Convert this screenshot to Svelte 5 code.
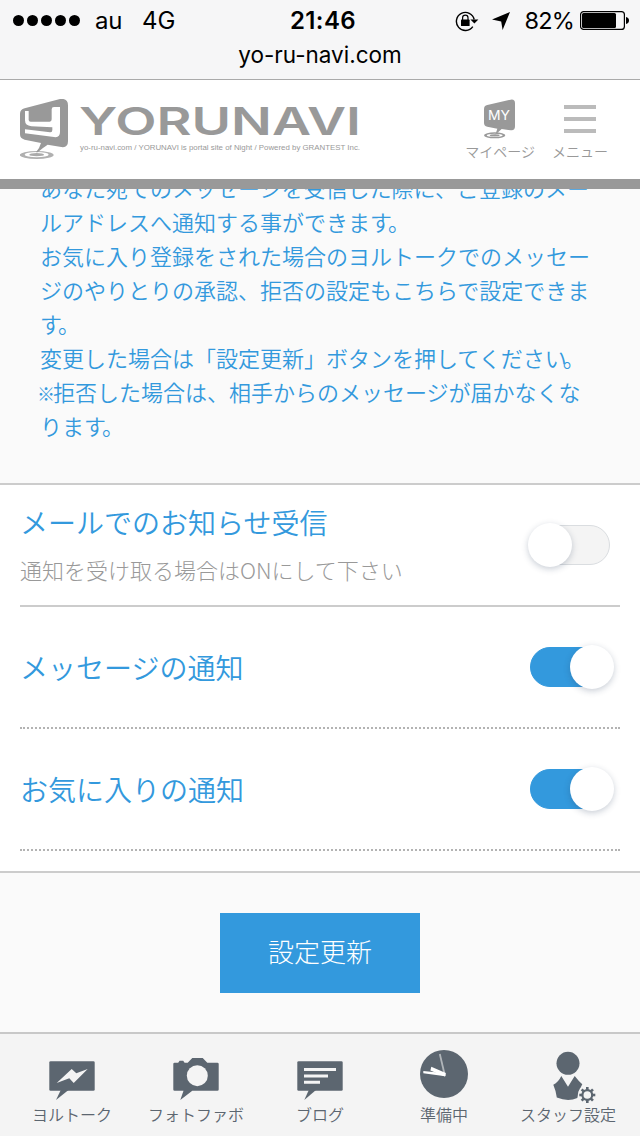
<script>
	let settings = $state([
		{ id: 'mail', title: 'メールでのお知らせ受信', note: '通知を受け取る場合はONにして下さい', on: false },
		{ id: 'message', title: 'メッセージの通知', note: '', on: true },
		{ id: 'favorite', title: 'お気に入りの通知', note: '', on: true }
	]);

	const tabs = [
		{ id: 'talk', label: 'ヨルトーク' },
		{ id: 'photo', label: 'フォトファボ' },
		{ id: 'blog', label: 'ブログ' },
		{ id: 'clock', label: '準備中' },
		{ id: 'staff', label: 'スタッフ設定' }
	];

	const teeth = [0, 45, 90, 135, 180, 225, 270, 315];
</script>

<div class="screen">
	<div class="status">
		<div class="status-row">
			<div class="carrier">
				<div class="signal"><i></i><i></i><i></i><i></i><i></i></div>
				<span class="au">au</span>
				<span>4G</span>
			</div>
			<b class="time">21:46</b>
			<div class="power">
				<svg class="lock" width="24" height="22" viewBox="0 0 24 22">
					<path d="M17.8 16.6A9 9 0 1 1 19.2 9.5" fill="none" stroke="#000" stroke-width="1.4" />
					<path d="M15.4 9.6h8l-4 4z" />
					<rect x="6" y="9.6" width="8.6" height="6.4" rx=".6" />
					<path d="M7.6 10V7.8a2.7 2.7 0 0 1 5.4 0V10" fill="none" stroke="#000" stroke-width="1.2" />
				</svg>
				<svg class="arrow" width="18" height="18" viewBox="0 0 18 18">
					<path d="M18 0L10.6 18L9.2 9.4L0 7.6z" />
				</svg>
				<span class="percent">82%</span>
				<svg width="49" height="19" viewBox="0 0 49 19">
					<rect x=".6" y=".6" width="43.8" height="17.8" rx="3" fill="none" stroke="#000" stroke-width="1.2" />
					<rect x="2" y="2" width="34" height="15" rx="1.5" />
					<path d="M46 6q3 .7 3 3.5T46 13z" />
				</svg>
			</div>
		</div>
		<div class="url">yo-ru-navi.com</div>
	</div>

	<header>
		<svg class="logo" width="342" height="70" viewBox="0 0 342 70">
			<g transform="scale(.33333) translate(-60 -57)">
				<ellipse cx="110" cy="225" rx="51" ry="12" fill="#b0b0b0" />
				<ellipse cx="110" cy="224" rx="36" ry="8" fill="#fff" />
				<ellipse cx="110" cy="224" rx="22" ry="5" fill="#aaa" />
				<path d="M74 85L180 57Q204 54 204 76V184Q204 204 184 201L143 194Q130 202 113 217H108Q119 204 123 189L74 179Q60 176 60 163V101Q60 89 74 85Z" fill="#999" />
				<path d="M75 93H86V120Q86 125 92 125H149Q155 125 155 118V88Q155 81 162 81H180V156Q180 174 162 171L75 160V148L150 157Q157 158 157 150V142L94 139Q75 137 75 121Z" fill="#fff" />
			</g>
			<text class="wordmark" x="59" y="36" textLength="282" lengthAdjust="spacingAndGlyphs">YORUNAVI</text>
			<text class="tagline" x="60" y="51" textLength="280" lengthAdjust="spacingAndGlyphs">yo-ru-navi.com / YORUNAVI is portal site of Night / Powered by GRANTEST Inc.</text>
		</svg>
		<nav>
			<div class="nav-item mypage">
				<svg width="32" height="40" viewBox="134 57 96 120">
					<ellipse cx="166" cy="166" rx="32" ry="9" fill="#999" />
					<ellipse cx="166" cy="166" rx="24" ry="5" fill="#fff" />
					<ellipse cx="166" cy="166" rx="15" ry="3.5" fill="#999" />
					<path d="M144 75L214 59Q227 57 227 70V139Q227 152 215 151L187 147L168 164L174 146L144 140Q134 138 134 129V87Q134 77 144 75Z" fill="#999" />
					<text class="my" x="179" y="120" textLength="66" lengthAdjust="spacingAndGlyphs" text-anchor="middle">MY</text>
				</svg>
				<span>マイページ</span>
			</div>
			<div class="nav-item menu">
				<div class="bars"><i></i><i></i><i></i></div>
				<span>メニュー</span>
			</div>
		</nav>
	</header>

	<section class="intro">
		<p>
			あなた宛てのメッセージを受信した際に、ご登録のメー<br />
			ルアドレスへ通知する事ができます<span class="maru">。</span><br />
			お気に入り登録をされた場合のヨルトークでのメッセー<br />
			ジのやりとりの承認、拒否の設定もこちらで設定できま<br />
			す<span class="maru">。</span><br />
			変更した場合は「設定更新」ボタンを押してください<span class="maru">。</span><br />
			<span class="kome">※</span>拒否した場合は、相手からのメッセージが届かなくな<br />
			ります<span class="maru">。</span>
		</p>
	</section>

	<section class="settings">
		{#each settings as s (s.id)}
			<div class="row" class:first={s.note}>
				<div>
					<h2>{s.title}</h2>
					{#if s.note}
						<p class="note">{s.note}</p>
					{/if}
				</div>
				<button class="toggle" class:on={s.on} aria-label={s.title} onclick={() => (s.on = !s.on)}>
					<span class="knob"></span>
				</button>
			</div>
		{/each}
	</section>

	<div class="actions">
		<button class="submit">設定更新</button>
	</div>

	<footer>
		{#each tabs as tab (tab.id)}
			<div class="tab">
				<svg width="60" height="60" viewBox="0 0 60 60" fill="#5c6670">
					{#if tab.id === 'talk'}
						<rect x="7.3" y="17.3" width="45.4" height="29.4" rx="1.3" />
						<path d="M18.8 46L14 56L26.5 46z" />
						<path d="M14.7 39L29.7 25L34.3 29.3L45.7 25L31.7 39L27.3 34.3z" fill="#f4f4f4" />
					{:else if tab.id === 'photo'}
						<path d="M8.6 18.8H12.2L13.6 16.7H17.2L18.6 18.8H21.7L26.3 14H36.7L41.3 18.8H51.4Q52.7 18.8 52.7 20V45.4Q52.7 46.7 51.4 46.7H26.3L14.3 56L17.5 46.7H8.6Q7.3 46.7 7.3 45.4V20Q7.3 18.8 8.6 18.8Z" />
						<circle cx="31.3" cy="31.7" r="10.5" fill="#f4f4f4" />
					{:else if tab.id === 'blog'}
						<rect x="7.3" y="17.3" width="45.4" height="29.4" rx="1.3" />
						<path d="M18.8 46L14.3 56L26 46z" />
						<path d="M14 24h32v3H14zM14 30.4h24v3H14zM14 36.8h16v3H14z" fill="#f4f4f4" />
					{:else if tab.id === 'clock'}
						<circle cx="30" cy="30" r="24" />
						<path d="M31 32L25.8 10" stroke="#b0b5b9" stroke-width="1.8" />
						<path d="M9.3 27L31.3 29.2V32.2L9.3 29.2z" fill="#fff" />
						<path d="M17.3 22.8L31.8 29L30.8 32.4L16.4 26.4z" fill="#fff" />
					{:else}
						<circle cx="30" cy="19.3" r="11.5" />
						<path d="M23.3 32L30 42.7L36.7 32Q40.5 37 44.3 40.3Q40 47 39.3 54Q30 58 18.8 53.5Q18 47 15.3 40.8Q20.5 38 23.3 32Z" />
						<circle cx="49.3" cy="51" r="9.5" fill="#f4f4f4" />
						<circle cx="49.3" cy="51" r="4.9" fill="none" stroke="#5c6670" stroke-width="2.2" />
						{#each teeth as t (t)}
							<rect x="48" y="43" width="2.6" height="3.2" transform="rotate({t} 49.3 51)" />
						{/each}
					{/if}
				</svg>
				<span>{tab.label}</span>
			</div>
		{/each}
	</footer>
</div>

<style>
	:global(body) { background: #fafafa; }
	.screen {
		width: 640px;
		height: 1136px;
		overflow: hidden;
		display: flex;
		flex-direction: column;
		box-sizing: border-box;
		background: #fafafa;
		font-family: "Noto Sans CJK JP", sans-serif;
		font-weight: 350;
	}
	svg { display: block; flex: none; }

	.status {
		height: 80px;
		box-sizing: border-box;
		border-bottom: 1px solid #aaa;
		background: #f6f6f7;
		color: #000;
		font: 400 24px/28px Inter, sans-serif;
	}
	.status-row {
		display: grid;
		grid-template-columns: 1fr auto 1fr;
		align-items: center;
		height: 41px;
		padding: 0 11px 0 13px;
	}
	.carrier, .power, .signal { display: flex; align-items: center; }
	.signal { gap: 3px; }
	.signal i { width: 11px; height: 11px; border-radius: 50%; background: #000; }
	.au { margin: 0 20px 0 15px; letter-spacing: -.3px; }
	.time { font-weight: 600; letter-spacing: .4px; padding-left: 4px; }
	.power { justify-content: flex-end; }
	.arrow { margin: 0 14px 0 13px; }
	.percent { margin-right: 6px; font-size: 23.5px; letter-spacing: -.8px; }
	.url { text-align: center; font-size: 22.5px; }

	header {
		height: 109px;
		box-sizing: border-box;
		border-bottom: 10px solid #999;
		background: #fff;
		display: flex;
		justify-content: space-between;
		padding: 19px 32px 0 20px;
	}
	.wordmark { font: 600 38px Inter, sans-serif; fill: #999; }
	.tagline { font: 8px "Liberation Sans", sans-serif; fill: #999; }
	.my { font: 40px Inter, sans-serif; fill: #fff; }
	nav { display: flex; gap: 18px; color: #999; font-size: 14px; line-height: 20px; }
	.nav-item { display: flex; flex-direction: column; align-items: center; white-space: nowrap; }
	.mypage { margin-right: -1px; }
	.nav-item > span { margin-top: 2px; }
	.bars { display: flex; flex-direction: column; gap: 8px; height: 34px; padding-top: 6px; }
	.bars i { width: 32px; height: 4px; background: #bbb; }

	.intro {
		height: 294px;
		display: flex;
		align-items: flex-end;
		overflow: hidden;
		box-sizing: border-box;
		padding: 0 40px 41px;
	}
	.intro p { margin: 0; color: #3399dd; font-size: 22px; line-height: 34px; white-space: nowrap; }
	.kome { display: inline-block; width: 13px; font-size: 18px; line-height: 20px; text-indent: -3px; }
	.maru { margin-left: -4px; }

	.settings {
		height: 390px;
		box-sizing: border-box;
		border-top: 2px solid #ccc;
		border-bottom: 2px solid #ccc;
		background: #fff;
		padding: 0 20px;
	}
	.row {
		height: 122px;
		box-sizing: border-box;
		display: flex;
		align-items: center;
		justify-content: space-between;
		padding-right: 10px;
		border-bottom: 2px dotted #b3b3b3;
	}
	.row.first { border-bottom: 2px solid #ccc; }
	h2 { margin: 0; color: #3399dd; font-size: 28px; font-weight: 350; line-height: 42px; }
	.note { margin: 9px 0 3px; color: #999; font-size: 22px; font-weight: 300; line-height: 34px; }
	.toggle {
		display: flex;
		align-items: center;
		width: 80px;
		height: 40px;
		padding: 0;
		border: 1px solid #dadde0;
		border-radius: 20px;
		background: #f4f4f4;
	}
	.toggle.on { border-color: #3399dd; background: #3399dd; }
	.knob {
		flex: none;
		width: 44px;
		height: 44px;
		margin-left: -3px;
		border-radius: 50%;
		background: #fff;
		box-shadow: 0 2px 6px rgba(40, 60, 90, .25);
	}
	.on .knob { margin-left: 39px; }

	.actions { height: 159px; display: flex; align-items: center; justify-content: center; }
	.submit {
		width: 200px;
		height: 80px;
		padding: 0 0 4px;
		border: 0;
		background: #3399dd;
		color: #fff;
		font: 300 26px "Noto Sans CJK JP", sans-serif;
	}

	footer {
		height: 104px;
		box-sizing: border-box;
		border-top: 2px solid #c8c8c8;
		background: #f4f4f4;
		display: grid;
		grid-template-columns: repeat(5, 1fr);
		padding: 10px 10px 0;
	}
	.tab { display: flex; flex-direction: column; align-items: center; color: #5c6670; font-size: 16px; line-height: 20px; white-space: nowrap; }
</style>
